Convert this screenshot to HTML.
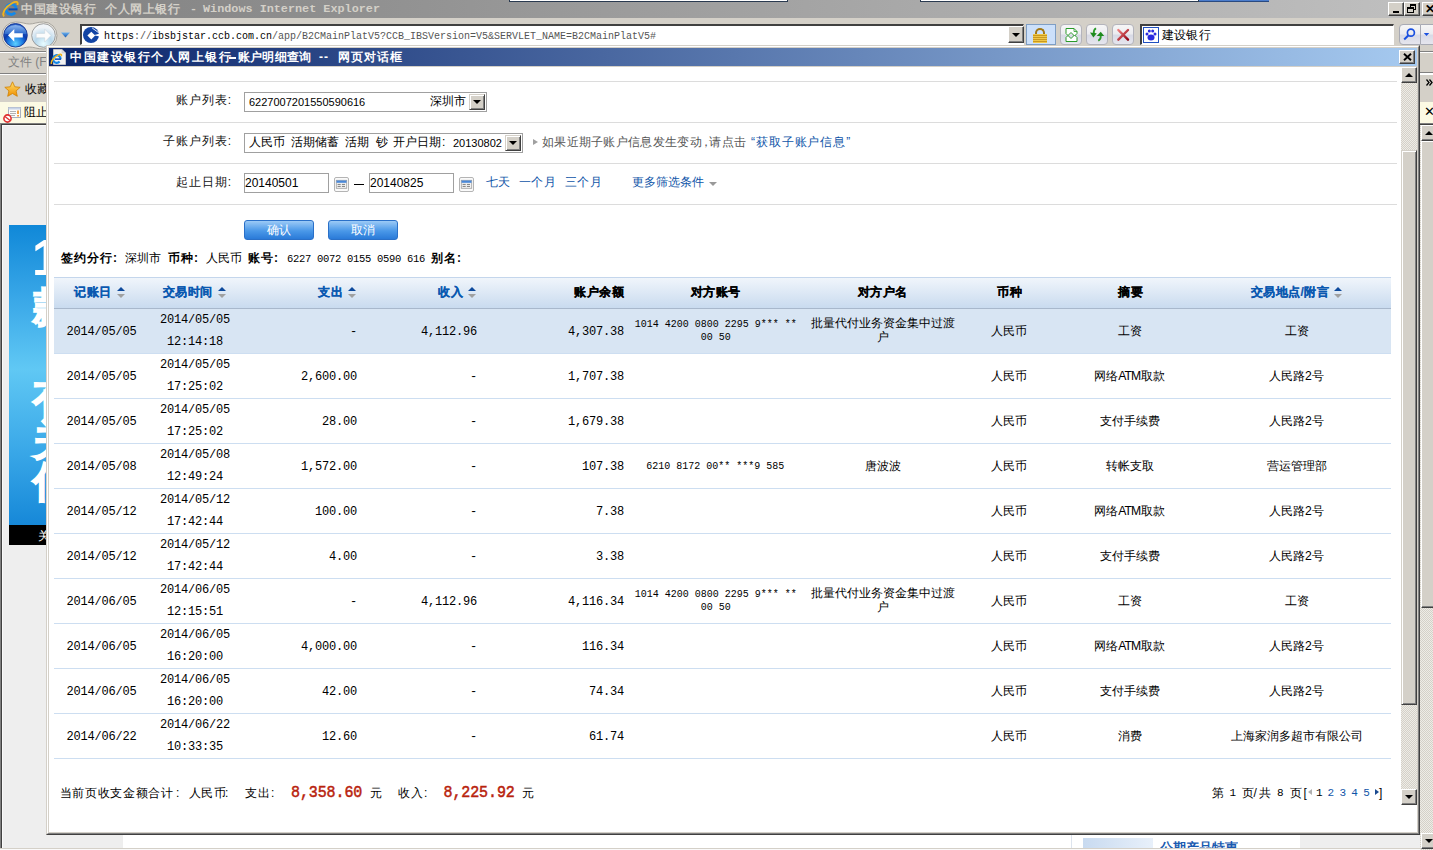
<!DOCTYPE html>
<html><head><meta charset="utf-8">
<style>
*{box-sizing:border-box;margin:0;padding:0}
html,body{width:1433px;height:850px;overflow:hidden;background:#d4d0c8;font-family:"Liberation Sans",sans-serif;font-size:12px;color:#000}
.a{position:absolute}
.t{position:absolute;white-space:nowrap;line-height:14px}
.btn3d{position:absolute;background:#d4d0c8;border-top:1px solid #fff;border-left:1px solid #fff;border-right:1px solid #404040;border-bottom:1px solid #404040;box-shadow:inset -1px -1px 0 #808080}
.chk{background-color:#eeece6;background-image:linear-gradient(45deg,#d4d0c8 25%,transparent 25%,transparent 75%,#d4d0c8 75%),linear-gradient(45deg,#d4d0c8 25%,transparent 25%,transparent 75%,#d4d0c8 75%);background-size:2px 2px;background-position:0 0,1px 1px}
.acct{font-family:"Liberation Mono",monospace;font-size:10px}
.cj{font-size:12.2px}
.red{color:#b8220c;font-family:"Liberation Mono",monospace;font-size:15px;font-weight:normal;-webkit-text-stroke:0.45px #b8220c;letter-spacing:-0.1px;transform:scaleY(1.12);transform-origin:0 0}
.num{font-family:"Liberation Mono",monospace;font-size:12px;letter-spacing:-0.2px}
.hd{font-weight:bold;color:#0a58b0;letter-spacing:0.5px;-webkit-text-stroke:0.2px #0a58b0}
.hdb{font-weight:bold;color:#000;letter-spacing:0.5px;-webkit-text-stroke:0.2px #000}
.sort{display:inline-block;width:8px;height:10px;position:relative;vertical-align:middle;margin-left:5px}
.sort:before{content:"";position:absolute;left:0;top:-1px;border-left:4px solid transparent;border-right:4px solid transparent;border-bottom:4px solid #0e4a9c}
.sort:after{content:"";position:absolute;left:0;top:6px;border-left:4px solid transparent;border-right:4px solid transparent;border-top:4px solid #a0a0a0}
</style></head><body>

<!-- IE title bar -->
<div class="a" style="left:0;top:0;width:1433px;height:18px;background:linear-gradient(90deg,#808080,#c0c0c0)"></div>
<div class="a" style="left:509px;top:0;width:279px;height:2px;background:#fff;border:1px solid #2a3a50;border-top:0"></div>
<div class="a" style="left:920px;top:0;width:279px;height:2px;background:#fff;border:1px solid #2a3a50;border-top:0"></div>
<div class="a" style="left:1199px;top:0;width:70px;height:2px;background:#4a7ccc;border-bottom:1px solid #2a4a80"></div>
<svg class="a" style="left:0;top:0" width="24" height="18" viewBox="0 0 24 18">
<path d="M15.1 12.6 A5.2 5.2 0 1 1 16.3 9.3" stroke="#1488e8" stroke-width="2.8" fill="none"/>
<rect x="8.5" y="8.4" width="9" height="2" fill="#0a4cb8"/>
<path d="M4 16.5 C1.5 13, 6 6.5, 12 3.2 C16 1, 18.5 1.5, 17.5 5" stroke="#f2b51c" stroke-width="1.8" fill="none"/>
</svg>
<div class="t" style="left:21px;top:2px;color:#d4d0c8;font-weight:bold;font-size:12px;letter-spacing:0.6px">中国建设银行</div>
<div class="t" style="left:105px;top:2px;color:#d4d0c8;font-weight:bold;font-size:12px;letter-spacing:0.6px">个人网上银行</div>
<div class="t" style="left:190px;top:2px;color:#d4d0c8;font-weight:bold;font-family:'Liberation Mono';font-size:11.6px">-</div>
<div class="t" style="left:203px;top:2px;color:#d4d0c8;font-weight:bold;font-family:'Liberation Mono';font-size:11.8px">Windows Internet Explorer</div>
<div class="btn3d" style="left:1388px;top:2px;width:16px;height:14px"><div class="a" style="left:4px;top:8px;width:6px;height:2px;background:#000"></div></div>
<div class="btn3d" style="left:1404px;top:2px;width:16px;height:14px"><div class="a" style="left:5px;top:1px;width:6px;height:6px;border:1px solid #000;border-top-width:2px"></div><div class="a" style="left:2px;top:4px;width:7px;height:6px;border:1px solid #000;border-top-width:2px;background:#d4d0c8"></div></div>
<div class="btn3d" style="left:1422px;top:2px;width:16px;height:14px"><div class="t" style="left:2px;top:-1px;font-size:12px;font-weight:bold">✕</div></div>

<!-- address row -->
<div class="a" style="left:0;top:18px;width:1433px;height:33px;background:#d4d0c8"></div>
<svg class="a" style="left:0;top:18px" width="80" height="34" viewBox="0 0 80 34">
<defs>
<radialGradient id="gb" cx="50%" cy="85%" r="70%"><stop offset="0" stop-color="#5cd0ff"/><stop offset="0.45" stop-color="#1a78e0"/><stop offset="0.7" stop-color="#0a3cb0"/><stop offset="1" stop-color="#2a60c8"/></radialGradient>
<linearGradient id="gbh" x1="0" y1="0" x2="0" y2="1"><stop offset="0" stop-color="#9cc4f4"/><stop offset="1" stop-color="#3070d0"/></linearGradient>
<radialGradient id="gf" cx="50%" cy="85%" r="70%"><stop offset="0" stop-color="#e8fcff"/><stop offset="0.5" stop-color="#b8d8ec"/><stop offset="1" stop-color="#f0f4f8"/></radialGradient>
<linearGradient id="gdd" x1="0" y1="0" x2="0" y2="1"><stop offset="0" stop-color="#6ab0f0"/><stop offset="1" stop-color="#1a5ab0"/></linearGradient>
</defs>
<path d="M15.5 4 C22 4, 25 6, 29.5 6 C34 6, 37 4, 43.5 4 A13.5 13.5 0 0 1 43.5 31 C37 31, 34 29, 29.5 29 C25 29, 22 31, 15.5 31 A13.5 13.5 0 0 1 15.5 4Z" fill="#ece9e2" stroke="#a8a59e" stroke-width="1"/>
<circle cx="15.5" cy="17.3" r="11.8" fill="url(#gb)" stroke="#0a2a88" stroke-width="0.8"/>
<path d="M4.5 16 A11 9 0 0 1 26.5 16 Z" fill="url(#gbh)" opacity="0.85"/>
<path d="M8 17.3 L14.3 11 L14.3 15.2 L22.8 15.2 L22.8 19.6 L14.3 19.6 L14.3 23.8Z" fill="#fff"/>
<circle cx="43.5" cy="17.5" r="11.8" fill="url(#gf)" stroke="#8a8a8a" stroke-width="0.8"/>
<path d="M51 17.5 L44.7 11.2 L44.7 15.4 L36.2 15.4 L36.2 19.8 L44.7 19.8 L44.7 24Z" fill="#fcfcfc" stroke="#c8d0d8" stroke-width="0.5"/>
<path d="M61 14.5 L70 14.5 L65.5 19.5Z" fill="url(#gdd)"/>
</svg>
<div class="a" style="left:80px;top:24px;width:944px;height:21px;background:#fff;border-top:2px solid #404040;border-left:2px solid #404040;border-right:1px solid #fff;border-bottom:1px solid #fff"></div>
<svg class="a" style="left:80px;top:24px" width="22" height="22" viewBox="80 24 22 22">
<circle cx="91" cy="35" r="8" fill="#1244a4"/>
<path d="M91.3 31.8 L95.2 35.6 L91.3 39.4 L87.4 35.6Z" fill="#fff"/>
<path d="M93.5 35.2 L100 33.6 L100 36.6Z" fill="#fff"/>
<path d="M92.2 28 L98.8 32.8" stroke="#fff" stroke-width="0.9"/>
</svg>
<div class="t" style="left:104px;top:30px;font-family:'Liberation Mono';font-size:10px;letter-spacing:0px;color:#000">https<span style="color:#555">://</span>ibsbjstar.ccb.com.cn<span style="color:#555">/app/B2CMainPlatV5?CCB_IBSVersion=V5&amp;SERVLET_NAME=B2CMainPlatV5#</span></div>
<div class="btn3d" style="left:1008px;top:26px;width:16px;height:17px"><div class="a" style="left:3px;top:6px;border-left:4px solid transparent;border-right:4px solid transparent;border-top:4px solid #000"></div></div>
<div class="a" style="left:1026px;top:24px;width:30px;height:21px;background:#cce0fa;border:1px solid #7e9ec4"></div>
<div class="a" style="left:1035px;top:28px;width:10px;height:7px;border:2px solid #a07818;border-bottom:0;border-radius:5px 5px 0 0"></div>
<div class="a" style="left:1033px;top:34px;width:14px;height:9px;background:repeating-linear-gradient(#f0c848 0 1px,#c89820 1px 2px)"></div>
<div class="a" style="left:1060px;top:24px;width:22px;height:21px;border:1px solid #b4b4bc;border-radius:4px;background:linear-gradient(#f6f6f6,#ececf0 45%,#d8dae6 55%,#e6e6ee)"></div>
<svg class="a" style="left:1055px;top:20px" width="85" height="28" viewBox="1055 20 85 28"><path d="M1066 28.5 H1074 L1077 31.5 V33.5 L1074.5 36 L1071 32.5 L1068 35.5 L1066 33.5 Z" fill="#fff" stroke="#2a9a2a" stroke-width="1"/><path d="M1066 37.5 L1068 35.5 L1071 38.5 L1074.5 35 L1077 37.5 V41.5 H1066 Z" fill="#fff" stroke="#2a9a2a" stroke-width="1"/><path d="M1074 28.5 V31.5 H1077" fill="none" stroke="#2a9a2a" stroke-width="0.8"/></svg>
<div class="a" style="left:1086px;top:24px;width:22px;height:21px;border:1px solid #b4b4bc;border-radius:4px;background:linear-gradient(#f6f6f6,#ececf0 45%,#d8dae6 55%,#e6e6ee)"></div>
<svg class="a" style="left:1055px;top:20px" width="85" height="28" viewBox="1055 20 85 28"><path d="M1096 28.3 C1094 29.5, 1093.5 31, 1093.8 33.5" stroke="#2a9a2a" stroke-width="1.8" fill="none"/><path d="M1090 32.6 L1096.8 33.2 L1093.4 37.4Z" fill="#1e8a1e"/><path d="M1098.3 40.8 C1100.5 39.5, 1101 37.5, 1100.7 35.5" stroke="#2a9a2a" stroke-width="1.8" fill="none"/><path d="M1096.8 35.9 L1104.2 35.9 L1100.7 31.8Z" fill="#1e8a1e"/></svg>
<div class="a" style="left:1112px;top:24px;width:22px;height:21px;border:1px solid #b4b4bc;border-radius:4px;background:linear-gradient(#f6f6f6,#ececf0 45%,#d8dae6 55%,#e6e6ee)"></div>
<svg class="a" style="left:1055px;top:20px" width="85" height="28" viewBox="1055 20 85 28"><defs><linearGradient id="gx" x1="0" y1="0" x2="1" y2="1"><stop offset="0" stop-color="#f08080"/><stop offset="1" stop-color="#900010"/></linearGradient></defs><path d="M1118.3 30 L1128 39.7 M1128 30 L1118.3 39.7" stroke="url(#gx)" stroke-width="2.4" stroke-linecap="round"/></svg>
<div class="a" style="left:1140px;top:24px;width:254px;height:21px;background:#fff;border-top:2px solid #404040;border-left:2px solid #404040;border-right:1px solid #fff;border-bottom:1px solid #fff"></div>
<div class="a" style="left:1143px;top:27px;width:16px;height:16px;border:1px solid #2050c0;background:#fff"></div>
<svg class="a" style="left:1144px;top:28px" width="14" height="14" viewBox="0 0 14 14"><ellipse cx="7" cy="9.5" rx="3.5" ry="3" fill="#2a2ae0"/><circle cx="3" cy="6" r="1.5" fill="#2a2ae0"/><circle cx="11" cy="6" r="1.5" fill="#2a2ae0"/><circle cx="5.3" cy="3" r="1.5" fill="#2a2ae0"/><circle cx="8.7" cy="3" r="1.5" fill="#2a2ae0"/></svg>
<div class="t" style="left:1162px;top:28px;font-size:12px;letter-spacing:0.2px">建设银行</div>
<div class="a" style="left:1399px;top:24px;width:22px;height:21px;border:1px solid #a8aab4;border-radius:4px 0 0 4px;background:linear-gradient(#f6f6f6,#ececf0 45%,#d8dae6 55%,#e6e6ee)"></div>
<div class="a" style="left:1421px;top:24px;width:16px;height:21px;border:1px solid #a8aab4;border-left:0;border-radius:0 4px 4px 0;background:linear-gradient(#f6f6f6,#ececf0 45%,#d8dae6 55%,#e6e6ee)"></div>
<svg class="a" style="left:1399px;top:24px" width="34" height="21" viewBox="1399 24 34 21"><circle cx="1410.9" cy="32.7" r="3.5" stroke="#1a50e0" stroke-width="1.7" fill="none"/><path d="M1408.5 35.3 L1404.2 39.5" stroke="#1a50e0" stroke-width="2"/><path d="M1423.8 33 L1429.3 33 L1426.5 35.9Z" fill="#1a50e0"/></svg>

<!-- menu / favorites / info bars -->
<div class="a" style="left:0;top:51px;width:1433px;height:1px;background:#808080"></div>
<div class="a" style="left:0;top:52px;width:1433px;height:1px;background:#fff"></div>
<div class="t" style="left:8px;top:55px;color:#808080;font-size:12px">文件 (F)</div>
<div class="a" style="left:0;top:73px;width:1433px;height:1px;background:#808080"></div>
<div class="a" style="left:0;top:74px;width:1433px;height:1px;background:#fff"></div>
<svg class="a" style="left:4px;top:81px" width="17" height="17" viewBox="0 0 17 17"><defs><linearGradient id="gs" x1="0" y1="0" x2="0" y2="1"><stop offset="0" stop-color="#ffe070"/><stop offset="1" stop-color="#f09000"/></linearGradient></defs><path d="M8.5 0.8 L10.8 5.8 L16.2 6.3 L12.1 9.9 L13.3 15.3 L8.5 12.5 L3.7 15.3 L4.9 9.9 L0.8 6.3 L6.2 5.8Z" fill="url(#gs)" stroke="#d08000" stroke-width="0.8"/></svg>
<div class="t" style="left:25px;top:82px;font-size:12px">收藏夹</div>
<div class="a" style="left:0;top:102px;width:1433px;height:21px;background:#fcfae4"></div>
<svg class="a" style="left:3px;top:106px" width="18" height="18" viewBox="0 0 18 18">
<rect x="5.5" y="1.5" width="12" height="10" fill="#fbfbfb" stroke="#a8b0c0"/>
<rect x="5.5" y="1.5" width="12" height="2" fill="#c8d4e8"/>
<path d="M7 5.5 H13 M7 7.5 H13 M7 9.5 H12" stroke="#a0a0a0" stroke-width="0.8"/>
<path d="M15 4.5 V8" stroke="#f08000" stroke-width="1.5"/><rect x="14.3" y="9" width="1.5" height="1.5" fill="#f08000"/>
<circle cx="4.5" cy="12.5" r="3.6" fill="#fff" stroke="#e03030" stroke-width="1.6"/>
<path d="M2 10.5 L7 14.5" stroke="#e03030" stroke-width="1.4"/>
</svg>
<div class="t" style="left:24px;top:105px;font-size:12px">阻止</div>
<div class="a" style="left:0;top:123px;width:1433px;height:1px;background:#808080"></div>
<div class="a" style="left:0;top:124px;width:1433px;height:1px;background:#404040"></div>

<!-- page area -->
<div class="a" style="left:0;top:125px;width:1433px;height:725px;background:#eeeeee"></div>
<div class="a" style="left:0;top:123px;width:1px;height:727px;background:#808080"></div>
<div class="a" style="left:1px;top:124px;width:1px;height:726px;background:#404040"></div>
<div class="a" style="left:2px;top:125px;width:1px;height:725px;background:#fafafa"></div>
<div class="a" style="left:2px;top:125px;width:1431px;height:1px;background:#fafafa"></div>
<div class="a" style="left:9px;top:225px;width:40px;height:300px;background:linear-gradient(#1088d8,#3aa8e8 25%,#60c8f4 48%,#3aa8e8 75%,#1688d8)"></div>
<div class="a" style="left:9px;top:225px;width:40px;height:300px;overflow:hidden">
<div class="t" style="left:23px;top:8px;color:#fff;font-weight:bold;font-size:50px;line-height:50px;font-family:'Liberation Sans'">1</div>
<div class="t" style="left:24px;top:60px;color:#fff;font-weight:900;font-size:42px;line-height:44px;white-space:normal;width:44px;-webkit-text-stroke:1.5px #fff">款</div>
<div class="t" style="left:24px;top:152px;color:#fff;font-weight:900;font-size:42px;line-height:42px;white-space:normal;width:44px;-webkit-text-stroke:1.5px #fff">有<br>关<br>信</div>
</div>
<div class="a" style="left:9px;top:525px;width:40px;height:20px;background:#000"></div>
<div class="t" style="left:38px;top:529px;color:#fff;font-size:12px">关</div>
<div class="a" style="left:123px;top:835px;width:1297px;height:13px;background:#fff"></div>
<div class="a" style="left:1071px;top:835px;width:1px;height:13px;background:#dde4ee"></div>
<div class="a" style="left:1083px;top:838px;width:70px;height:10px;background:linear-gradient(90deg,#c8daf0,#e8f0fa)"></div>
<div class="t" style="left:1160px;top:838px;color:#1a5ab0;font-weight:bold;font-size:13px;height:10px;overflow:hidden;line-height:20px">公期产品特惠</div>
<div class="a" style="left:1300px;top:835px;width:120px;height:13px;background:#eeeeee"></div>
<div class="a" style="left:0;top:848px;width:1433px;height:1px;background:#d4d0c8"></div><div class="a" style="left:0;top:849px;width:1433px;height:1px;background:#fafafa"></div>
<!-- outer right strip -->
<div class="a" style="left:1420px;top:53px;width:13px;height:19px;background:#d4d0c8"></div>
<div class="a" style="left:1420px;top:72px;width:13px;height:1px;background:#808080"></div>
<div class="a" style="left:1420px;top:73px;width:13px;height:1px;background:#fff"></div>
<svg class="a" style="left:1426px;top:79px" width="7" height="7" viewBox="0 0 7 7"><path d="M0.5 0.5 L3 3.5 L0.5 6.5 M3.5 0.5 L6 3.5 L3.5 6.5" stroke="#000" stroke-width="1.3" fill="none"/></svg>
<div class="a" style="left:1420px;top:102px;width:13px;height:21px;background:#fcfae4"></div>
<div class="t" style="left:1424px;top:105px;font-size:13px">✕</div>
<div class="a chk" style="left:1420px;top:125px;width:13px;height:725px"></div>
<div class="btn3d" style="left:1421px;top:125px;width:17px;height:16px"><div class="a" style="left:3px;top:5px;border-left:4px solid transparent;border-right:4px solid transparent;border-bottom:4px solid #000"></div></div>
<div class="btn3d" style="left:1421px;top:141px;width:17px;height:467px"></div>
<div class="btn3d" style="left:1421px;top:833px;width:17px;height:16px"><div class="a" style="left:3px;top:5px;border-left:4px solid transparent;border-right:4px solid transparent;border-top:4px solid #000"></div></div>

<!-- DIALOG -->
<div class="a" style="left:46px;top:45px;width:1374px;height:790px;background:#d4d0c8;border-top:1px solid #d4d0c8;border-left:1px solid #d4d0c8;border-right:1px solid #404040;border-bottom:1px solid #404040"></div>
<div class="a" style="left:47px;top:46px;width:1372px;height:788px;border-top:1px solid #fff;border-left:1px solid #fff;border-right:1px solid #808080;border-bottom:1px solid #808080"></div>
<div class="a" style="left:49px;top:48px;width:1368px;height:18px;background:linear-gradient(90deg,#0a246a,#a6caf0)"></div>
<svg class="a" style="left:50px;top:48px" width="18" height="18" viewBox="0 0 18 18">
<path d="M3.5 1.5 H12 L15.5 5 V16.5 H3.5 Z" fill="#f2f2f2" stroke="#d0d0d0" stroke-width="0.8"/>
<path d="M12 1.5 V5 H15.5" fill="#dcdcdc" stroke="#c8c8c8" stroke-width="0.6"/>
<path d="M9.6 13.6 A3.8 3.8 0 1 1 10.6 11.2" stroke="#1488e8" stroke-width="2.2" fill="none"/>
<rect x="4.8" y="10.4" width="6.2" height="1.5" fill="#0a4cb8"/>
<path d="M1.5 16 C0.5 13.5, 4 9, 8.5 6.8 C11 5.6, 12 6.5, 11.2 8.2" stroke="#f2b51c" stroke-width="1.5" fill="none"/>
</svg>
<div class="t" style="left:70px;top:50px;color:#fff;font-weight:bold;letter-spacing:1.5px">中国建设银行个人网上银行</div>
<div class="a" style="left:229px;top:57px;width:7px;height:2px;background:#fff"></div>
<div class="t" style="left:238px;top:50px;color:#fff;font-weight:bold;letter-spacing:0.2px">账户明细查询</div>
<div class="t" style="left:319px;top:50px;color:#fff;font-weight:bold;letter-spacing:1px">--</div>
<div class="t" style="left:338px;top:50px;color:#fff;font-weight:bold;letter-spacing:1px">网页对话框</div>
<div class="btn3d" style="left:1399px;top:50px;width:16px;height:14px"><svg class="a" style="left:3px;top:2px" width="9" height="8" viewBox="0 0 9 8"><path d="M1 0.8 L8 7.2 M8 0.8 L1 7.2" stroke="#000" stroke-width="1.9"/></svg></div>
<!-- dialog content -->
<div class="a" style="left:49px;top:67px;width:1368px;height:765px;background:#fff"></div>

<!-- dialog scrollbar -->
<div class="btn3d" style="left:1401px;top:67px;width:16px;height:16px"><div class="a" style="left:3px;top:5px;border-left:4px solid transparent;border-right:4px solid transparent;border-bottom:4px solid #000"></div></div>
<div class="a chk" style="left:1401px;top:83px;width:16px;height:706px"></div>
<div class="btn3d" style="left:1401px;top:150px;width:16px;height:555px;border-top-color:#d4d0c8;border-left-color:#d4d0c8;box-shadow:inset 1px 1px 0 #fff,inset -1px -1px 0 #808080"></div>
<div class="btn3d" style="left:1401px;top:789px;width:16px;height:16px"><div class="a" style="left:3px;top:5px;border-left:4px solid transparent;border-right:4px solid transparent;border-top:4px solid #000"></div></div>

<!-- form -->
<div class="a" style="left:54px;top:81px;width:1343px;height:1px;background:#dcdcdc"></div>
<div class="a" style="left:54px;top:122px;width:1343px;height:1px;background:#dcdcdc"></div>
<div class="a" style="left:54px;top:163px;width:1343px;height:1px;background:#dcdcdc"></div>
<div class="a" style="left:54px;top:204px;width:1343px;height:1px;background:#dcdcdc"></div>

<div class="t" style="left:100px;top:93px;width:131px;text-align:right;color:#111;letter-spacing:1px">账户列表<span style="margin-left:0px;letter-spacing:0">:</span></div>
<div class="a" style="left:244px;top:92px;width:243px;height:20px;border:1px solid #a0a0a0;background:#fff"></div>
<div class="t" style="left:249px;top:95px;font-size:11px">6227007201550590616</div>
<div class="t" style="left:430px;top:94px">深圳市</div>
<div class="btn3d" style="left:469px;top:94px;width:16px;height:16px;border-top-color:#d4d0c8;border-left-color:#d4d0c8;box-shadow:inset 1px 1px 0 #fff,inset -1px -1px 0 #808080"><div class="a" style="left:3px;top:5px;border-left:4px solid transparent;border-right:4px solid transparent;border-top:4px solid #000"></div></div>

<div class="t" style="left:100px;top:134px;width:131px;text-align:right;color:#111;letter-spacing:1px">子账户列表<span style="margin-left:0px;letter-spacing:0">:</span></div>
<div class="a" style="left:244px;top:133px;width:279px;height:20px;border:1px solid #a0a0a0;background:#fff"></div>
<div class="t" style="left:249px;top:135px">人民币</div>
<div class="t" style="left:291px;top:135px">活期储蓄</div>
<div class="t" style="left:345px;top:135px">活期</div>
<div class="t" style="left:376px;top:135px">钞</div>
<div class="t" style="left:393px;top:135px">开户日期<span style="margin-left:1px">:</span></div>
<div class="t" style="left:453px;top:136px;font-size:11px">20130802</div>
<div class="btn3d" style="left:505px;top:135px;width:16px;height:16px;border-top-color:#d4d0c8;border-left-color:#d4d0c8;box-shadow:inset 1px 1px 0 #fff,inset -1px -1px 0 #808080"><div class="a" style="left:3px;top:5px;border-left:4px solid transparent;border-right:4px solid transparent;border-top:4px solid #000"></div></div>
<div class="a" style="left:533px;top:139px;border-top:3.5px solid transparent;border-bottom:3.5px solid transparent;border-left:5px solid #a0a0a0"></div>
<div class="t" style="left:542px;top:135px;color:#555;letter-spacing:0.3px">如果近期子账户信息发生变动<span style="margin-left:-2px">，</span><span style="margin-left:-3px">请点击</span></div>
<div class="t" style="left:751px;top:135px;color:#0f55a8;letter-spacing:0.9px">“获取子账户信息”</div>

<div class="t" style="left:100px;top:175px;width:131px;text-align:right;color:#111;letter-spacing:1px">起止日期<span style="margin-left:0px;letter-spacing:0">:</span></div>
<div class="a" style="left:244px;top:173px;width:85px;height:20px;border:1px solid #a0a0a0;background:#fff"></div>
<div class="t" style="left:245px;top:176px;font-size:12px">20140501</div>
<svg class="a" style="left:334px;top:177px" width="15" height="15" viewBox="0 0 15 15"><rect x="0.5" y="0.5" width="14" height="14" rx="1.5" fill="#fafafa" stroke="#b4b4b4"/><rect x="2.3" y="3.3" width="10.4" height="8" fill="#f2f2f2" stroke="#a0a0a0" stroke-width="0.8"/><rect x="2.5" y="3.5" width="10" height="2.3" fill="#4a88d8"/><rect x="3.6" y="6.9" width="3.1" height="1.1" fill="#8a8a8a"/><rect x="7.9" y="6.9" width="3.1" height="1.1" fill="#8a8a8a"/><rect x="3.6" y="8.9" width="3.1" height="1.1" fill="#8a8a8a"/><rect x="7.9" y="8.9" width="3.1" height="1.1" fill="#8a8a8a"/></svg>
<div class="a" style="left:354px;top:184px;width:10px;height:1px;background:#000"></div>
<div class="a" style="left:369px;top:173px;width:85px;height:20px;border:1px solid #a0a0a0;background:#fff"></div>
<div class="t" style="left:370px;top:176px;font-size:12px">20140825</div>
<svg class="a" style="left:459px;top:177px" width="15" height="15" viewBox="0 0 15 15"><rect x="0.5" y="0.5" width="14" height="14" rx="1.5" fill="#fafafa" stroke="#b4b4b4"/><rect x="2.3" y="3.3" width="10.4" height="8" fill="#f2f2f2" stroke="#a0a0a0" stroke-width="0.8"/><rect x="2.5" y="3.5" width="10" height="2.3" fill="#4a88d8"/><rect x="3.6" y="6.9" width="3.1" height="1.1" fill="#8a8a8a"/><rect x="7.9" y="6.9" width="3.1" height="1.1" fill="#8a8a8a"/><rect x="3.6" y="8.9" width="3.1" height="1.1" fill="#8a8a8a"/><rect x="7.9" y="8.9" width="3.1" height="1.1" fill="#8a8a8a"/></svg>
<div class="t" style="left:486px;top:175px;color:#0f55a8">七天</div>
<div class="t" style="left:519px;top:175px;color:#0f55a8;letter-spacing:0.3px">一个月</div>
<div class="t" style="left:565px;top:175px;color:#0f55a8;letter-spacing:0.3px">三个月</div>
<div class="t" style="left:632px;top:175px;color:#0f55a8">更多筛选条件</div>
<div class="a" style="left:709px;top:182px;border-left:4px solid transparent;border-right:4px solid transparent;border-top:4px solid #999"></div>

<div class="a" style="left:244px;top:220px;width:70px;height:20px;border:1px solid #2a70c8;border-radius:3px;background:linear-gradient(#9ccaf6,#4a98e8 55%,#2a7ad8)"></div>
<div class="t" style="left:244px;top:223px;width:70px;text-align:center;color:#fff">确认</div>
<div class="a" style="left:328px;top:220px;width:70px;height:20px;border:1px solid #2a70c8;border-radius:3px;background:linear-gradient(#9ccaf6,#4a98e8 55%,#2a7ad8)"></div>
<div class="t" style="left:328px;top:223px;width:70px;text-align:center;color:#fff">取消</div>

<div class="t" style="left:61px;top:251px;font-weight:bold;letter-spacing:1px">签约分行<span style="letter-spacing:0">:</span></div>
<div class="t" style="left:125px;top:251px">深圳市</div>
<div class="t" style="left:168px;top:251px;font-weight:bold;letter-spacing:1px">币种<span style="letter-spacing:0">:</span></div>
<div class="t" style="left:206px;top:251px">人民币</div>
<div class="t" style="left:248px;top:251px;font-weight:bold;letter-spacing:1px">账号<span style="letter-spacing:0">:</span></div>
<div class="t" style="left:287px;top:252px;font-family:'Liberation Mono';font-size:10.5px;letter-spacing:-0.3px">6227 0072 0155 0590 616</div>
<div class="t" style="left:431px;top:251px;font-weight:bold;letter-spacing:1px">别名<span style="letter-spacing:0">:</span></div>

<!-- table -->
<div class="a" style="left:54px;top:277px;width:1337px;height:32px;background:linear-gradient(#f0f5fb,#c9dbef);border-top:1px solid #c4d6ec;border-bottom:1px solid #a8b8cc"></div>

<!--TABLE-->
<div class="t hd" style="left:-50.5px;top:285.0px;width:300px;text-align:center;">记账日<span class="sort"></span></div>
<div class="t hd" style="left:44.0px;top:285.0px;width:300px;text-align:center;">交易时间<span class="sort"></span></div>
<div class="t hd" style="left:156.0px;top:285.0px;width:200px;text-align:right;">支出<span class="sort"></span></div>
<div class="t hd" style="left:276.0px;top:285.0px;width:200px;text-align:right;">收入<span class="sort"></span></div>
<div class="t hdb" style="left:424.0px;top:285.0px;width:200px;text-align:right;">账户余额</div>
<div class="t hdb" style="left:565.5px;top:285.0px;width:300px;text-align:center;">对方账号</div>
<div class="t hdb" style="left:732.5px;top:285.0px;width:300px;text-align:center;">对方户名</div>
<div class="t hdb" style="left:859.5px;top:285.0px;width:300px;text-align:center;">币种</div>
<div class="t hdb" style="left:980.5px;top:285.0px;width:300px;text-align:center;">摘要</div>
<div class="t hd" style="left:1146.5px;top:285.0px;width:300px;text-align:center;">交易地点/附言<span class="sort"></span></div>
<div class="a" style="left:54px;top:309px;width:1337px;height:44px;background:#d8e5f3"></div>
<div class="a" style="left:54px;top:353px;width:1337px;height:1px;background:#cddef1"></div>
<div class="t num" style="left:-48.5px;top:325.0px;width:300px;text-align:center;">2014/05/05</div>
<div class="t num" style="left:45.0px;top:313.0px;width:300px;text-align:center;">2014/05/05</div>
<div class="t num" style="left:45.0px;top:335.0px;width:300px;text-align:center;">12:14:18</div>
<div class="t num" style="left:157.0px;top:325.0px;width:200px;text-align:right;">-</div>
<div class="t num" style="left:277.0px;top:325.0px;width:200px;text-align:right;">4,112.96</div>
<div class="t num" style="left:424.0px;top:325.0px;width:200px;text-align:right;">4,307.38</div>
<div class="t acct" style="left:565.7px;top:318.0px;width:300px;text-align:center;">1014 4200 0800 2295 9*** **</div>
<div class="t acct" style="left:565.7px;top:331.0px;width:300px;text-align:center;">00 50</div>
<div class="t cj" style="left:732.5px;top:316.0px;width:300px;text-align:center;">批量代付业务资金集中过渡</div>
<div class="t cj" style="left:732.5px;top:330.0px;width:300px;text-align:center;">户</div>
<div class="t cj" style="left:858.7px;top:323.5px;width:300px;text-align:center;">人民币</div>
<div class="t cj" style="left:979.7px;top:323.5px;width:300px;text-align:center;">工资</div>
<div class="t cj" style="left:1146.5px;top:323.5px;width:300px;text-align:center;">工资</div>
<div class="a" style="left:54px;top:398px;width:1337px;height:1px;background:#cddef1"></div>
<div class="t num" style="left:-48.5px;top:370.0px;width:300px;text-align:center;">2014/05/05</div>
<div class="t num" style="left:45.0px;top:358.0px;width:300px;text-align:center;">2014/05/05</div>
<div class="t num" style="left:45.0px;top:380.0px;width:300px;text-align:center;">17:25:02</div>
<div class="t num" style="left:157.0px;top:370.0px;width:200px;text-align:right;">2,600.00</div>
<div class="t num" style="left:277.0px;top:370.0px;width:200px;text-align:right;">-</div>
<div class="t num" style="left:424.0px;top:370.0px;width:200px;text-align:right;">1,707.38</div>
<div class="t cj" style="left:858.7px;top:368.5px;width:300px;text-align:center;">人民币</div>
<div class="t cj" style="left:979.7px;top:368.5px;width:300px;text-align:center;">网络<span style="letter-spacing:-1px;margin-right:1px">ATM</span>取款</div>
<div class="t cj" style="left:1146.5px;top:368.5px;width:300px;text-align:center;">人民路2号</div>
<div class="a" style="left:54px;top:443px;width:1337px;height:1px;background:#cddef1"></div>
<div class="t num" style="left:-48.5px;top:415.0px;width:300px;text-align:center;">2014/05/05</div>
<div class="t num" style="left:45.0px;top:403.0px;width:300px;text-align:center;">2014/05/05</div>
<div class="t num" style="left:45.0px;top:425.0px;width:300px;text-align:center;">17:25:02</div>
<div class="t num" style="left:157.0px;top:415.0px;width:200px;text-align:right;">28.00</div>
<div class="t num" style="left:277.0px;top:415.0px;width:200px;text-align:right;">-</div>
<div class="t num" style="left:424.0px;top:415.0px;width:200px;text-align:right;">1,679.38</div>
<div class="t cj" style="left:858.7px;top:413.5px;width:300px;text-align:center;">人民币</div>
<div class="t cj" style="left:979.7px;top:413.5px;width:300px;text-align:center;">支付手续费</div>
<div class="t cj" style="left:1146.5px;top:413.5px;width:300px;text-align:center;">人民路2号</div>
<div class="a" style="left:54px;top:488px;width:1337px;height:1px;background:#cddef1"></div>
<div class="t num" style="left:-48.5px;top:460.0px;width:300px;text-align:center;">2014/05/08</div>
<div class="t num" style="left:45.0px;top:448.0px;width:300px;text-align:center;">2014/05/08</div>
<div class="t num" style="left:45.0px;top:470.0px;width:300px;text-align:center;">12:49:24</div>
<div class="t num" style="left:157.0px;top:460.0px;width:200px;text-align:right;">1,572.00</div>
<div class="t num" style="left:277.0px;top:460.0px;width:200px;text-align:right;">-</div>
<div class="t num" style="left:424.0px;top:460.0px;width:200px;text-align:right;">107.38</div>
<div class="t acct" style="left:565.2px;top:460.0px;width:300px;text-align:center;">6210 8172 00** ***9 585</div>
<div class="t cj" style="left:732.5px;top:459.0px;width:300px;text-align:center;">唐波波</div>
<div class="t cj" style="left:858.7px;top:458.5px;width:300px;text-align:center;">人民币</div>
<div class="t cj" style="left:979.7px;top:458.5px;width:300px;text-align:center;">转帐支取</div>
<div class="t cj" style="left:1146.5px;top:458.5px;width:300px;text-align:center;">营运管理部</div>
<div class="a" style="left:54px;top:533px;width:1337px;height:1px;background:#cddef1"></div>
<div class="t num" style="left:-48.5px;top:505.0px;width:300px;text-align:center;">2014/05/12</div>
<div class="t num" style="left:45.0px;top:493.0px;width:300px;text-align:center;">2014/05/12</div>
<div class="t num" style="left:45.0px;top:515.0px;width:300px;text-align:center;">17:42:44</div>
<div class="t num" style="left:157.0px;top:505.0px;width:200px;text-align:right;">100.00</div>
<div class="t num" style="left:277.0px;top:505.0px;width:200px;text-align:right;">-</div>
<div class="t num" style="left:424.0px;top:505.0px;width:200px;text-align:right;">7.38</div>
<div class="t cj" style="left:858.7px;top:503.5px;width:300px;text-align:center;">人民币</div>
<div class="t cj" style="left:979.7px;top:503.5px;width:300px;text-align:center;">网络<span style="letter-spacing:-1px;margin-right:1px">ATM</span>取款</div>
<div class="t cj" style="left:1146.5px;top:503.5px;width:300px;text-align:center;">人民路2号</div>
<div class="a" style="left:54px;top:578px;width:1337px;height:1px;background:#cddef1"></div>
<div class="t num" style="left:-48.5px;top:550.0px;width:300px;text-align:center;">2014/05/12</div>
<div class="t num" style="left:45.0px;top:538.0px;width:300px;text-align:center;">2014/05/12</div>
<div class="t num" style="left:45.0px;top:560.0px;width:300px;text-align:center;">17:42:44</div>
<div class="t num" style="left:157.0px;top:550.0px;width:200px;text-align:right;">4.00</div>
<div class="t num" style="left:277.0px;top:550.0px;width:200px;text-align:right;">-</div>
<div class="t num" style="left:424.0px;top:550.0px;width:200px;text-align:right;">3.38</div>
<div class="t cj" style="left:858.7px;top:548.5px;width:300px;text-align:center;">人民币</div>
<div class="t cj" style="left:979.7px;top:548.5px;width:300px;text-align:center;">支付手续费</div>
<div class="t cj" style="left:1146.5px;top:548.5px;width:300px;text-align:center;">人民路2号</div>
<div class="a" style="left:54px;top:623px;width:1337px;height:1px;background:#cddef1"></div>
<div class="t num" style="left:-48.5px;top:595.0px;width:300px;text-align:center;">2014/06/05</div>
<div class="t num" style="left:45.0px;top:583.0px;width:300px;text-align:center;">2014/06/05</div>
<div class="t num" style="left:45.0px;top:605.0px;width:300px;text-align:center;">12:15:51</div>
<div class="t num" style="left:157.0px;top:595.0px;width:200px;text-align:right;">-</div>
<div class="t num" style="left:277.0px;top:595.0px;width:200px;text-align:right;">4,112.96</div>
<div class="t num" style="left:424.0px;top:595.0px;width:200px;text-align:right;">4,116.34</div>
<div class="t acct" style="left:565.7px;top:588.0px;width:300px;text-align:center;">1014 4200 0800 2295 9*** **</div>
<div class="t acct" style="left:565.7px;top:601.0px;width:300px;text-align:center;">00 50</div>
<div class="t cj" style="left:732.5px;top:586.0px;width:300px;text-align:center;">批量代付业务资金集中过渡</div>
<div class="t cj" style="left:732.5px;top:600.0px;width:300px;text-align:center;">户</div>
<div class="t cj" style="left:858.7px;top:593.5px;width:300px;text-align:center;">人民币</div>
<div class="t cj" style="left:979.7px;top:593.5px;width:300px;text-align:center;">工资</div>
<div class="t cj" style="left:1146.5px;top:593.5px;width:300px;text-align:center;">工资</div>
<div class="a" style="left:54px;top:668px;width:1337px;height:1px;background:#cddef1"></div>
<div class="t num" style="left:-48.5px;top:640.0px;width:300px;text-align:center;">2014/06/05</div>
<div class="t num" style="left:45.0px;top:628.0px;width:300px;text-align:center;">2014/06/05</div>
<div class="t num" style="left:45.0px;top:650.0px;width:300px;text-align:center;">16:20:00</div>
<div class="t num" style="left:157.0px;top:640.0px;width:200px;text-align:right;">4,000.00</div>
<div class="t num" style="left:277.0px;top:640.0px;width:200px;text-align:right;">-</div>
<div class="t num" style="left:424.0px;top:640.0px;width:200px;text-align:right;">116.34</div>
<div class="t cj" style="left:858.7px;top:638.5px;width:300px;text-align:center;">人民币</div>
<div class="t cj" style="left:979.7px;top:638.5px;width:300px;text-align:center;">网络<span style="letter-spacing:-1px;margin-right:1px">ATM</span>取款</div>
<div class="t cj" style="left:1146.5px;top:638.5px;width:300px;text-align:center;">人民路2号</div>
<div class="a" style="left:54px;top:713px;width:1337px;height:1px;background:#cddef1"></div>
<div class="t num" style="left:-48.5px;top:685.0px;width:300px;text-align:center;">2014/06/05</div>
<div class="t num" style="left:45.0px;top:673.0px;width:300px;text-align:center;">2014/06/05</div>
<div class="t num" style="left:45.0px;top:695.0px;width:300px;text-align:center;">16:20:00</div>
<div class="t num" style="left:157.0px;top:685.0px;width:200px;text-align:right;">42.00</div>
<div class="t num" style="left:277.0px;top:685.0px;width:200px;text-align:right;">-</div>
<div class="t num" style="left:424.0px;top:685.0px;width:200px;text-align:right;">74.34</div>
<div class="t cj" style="left:858.7px;top:683.5px;width:300px;text-align:center;">人民币</div>
<div class="t cj" style="left:979.7px;top:683.5px;width:300px;text-align:center;">支付手续费</div>
<div class="t cj" style="left:1146.5px;top:683.5px;width:300px;text-align:center;">人民路2号</div>
<div class="a" style="left:54px;top:758px;width:1337px;height:1px;background:#cddef1"></div>
<div class="t num" style="left:-48.5px;top:730.0px;width:300px;text-align:center;">2014/06/22</div>
<div class="t num" style="left:45.0px;top:718.0px;width:300px;text-align:center;">2014/06/22</div>
<div class="t num" style="left:45.0px;top:740.0px;width:300px;text-align:center;">10:33:35</div>
<div class="t num" style="left:157.0px;top:730.0px;width:200px;text-align:right;">12.60</div>
<div class="t num" style="left:277.0px;top:730.0px;width:200px;text-align:right;">-</div>
<div class="t num" style="left:424.0px;top:730.0px;width:200px;text-align:right;">61.74</div>
<div class="t cj" style="left:858.7px;top:728.5px;width:300px;text-align:center;">人民币</div>
<div class="t cj" style="left:979.7px;top:728.5px;width:300px;text-align:center;">消费</div>
<div class="t cj" style="left:1146.5px;top:728.5px;width:300px;text-align:center;">上海家润多超市有限公司</div>
<div class="t" style="left:59.5px;top:786px;letter-spacing:0.7px">当前页收支金额合计</div>
<div class="t" style="left:176px;top:786px;">:</div>
<div class="t" style="left:189px;top:786px;letter-spacing:0.3px">人民币</div>
<div class="t" style="left:225px;top:786px;">:</div>
<div class="t" style="left:245px;top:786px;letter-spacing:0.5px">支出</div>
<div class="t" style="left:271px;top:786px;">:</div>
<div class="t red" style="left:291px;top:786px;">8,358.60</div>
<div class="t" style="left:370px;top:786px;">元</div>
<div class="t" style="left:398px;top:786px;letter-spacing:0.5px">收入</div>
<div class="t" style="left:424px;top:786px;">:</div>
<div class="t red" style="left:443.5px;top:786px;">8,225.92</div>
<div class="t" style="left:522px;top:786px;">元</div>
<div class="t" style="left:1211.5px;top:786px;">第</div>
<div class="t" style="left:1229.5px;top:786px;font-family:'Liberation Mono';font-size:11px">1</div>
<div class="t" style="left:1241.5px;top:786px;">页</div>
<div class="t" style="left:1253.5px;top:786px;font-family:'Liberation Sans';font-size:12px">/</div>
<div class="t" style="left:1259px;top:786px;">共</div>
<div class="t" style="left:1277px;top:786px;font-family:'Liberation Mono';font-size:11px">8</div>
<div class="t" style="left:1289.5px;top:786px;">页</div>
<div class="t" style="left:1303.5px;top:786px;font-family:'Liberation Sans';font-size:12px">[</div>
<div class="a" style="left:1308px;top:789px;border-top:3px solid transparent;border-bottom:3px solid transparent;border-right:4px solid #b0b0b0"></div>
<div class="t" style="left:1316px;top:786px;font-family:'Liberation Mono';font-size:11px">1</div>
<div class="t" style="left:1327.5px;top:786px;font-family:'Liberation Mono';font-size:11px;color:#0f55a8">2</div>
<div class="t" style="left:1339.5px;top:786px;font-family:'Liberation Mono';font-size:11px;color:#0f55a8">3</div>
<div class="t" style="left:1351.3px;top:786px;font-family:'Liberation Mono';font-size:11px;color:#0f55a8">4</div>
<div class="t" style="left:1363.2px;top:786px;font-family:'Liberation Mono';font-size:11px;color:#0f55a8">5</div>
<div class="a" style="left:1375px;top:789px;border-top:3px solid transparent;border-bottom:3px solid transparent;border-left:4px solid #1a4a90"></div>
<div class="t" style="left:1379px;top:786px;font-family:'Liberation Sans';font-size:12px">]</div>
<!--/TABLE-->


</body></html>
